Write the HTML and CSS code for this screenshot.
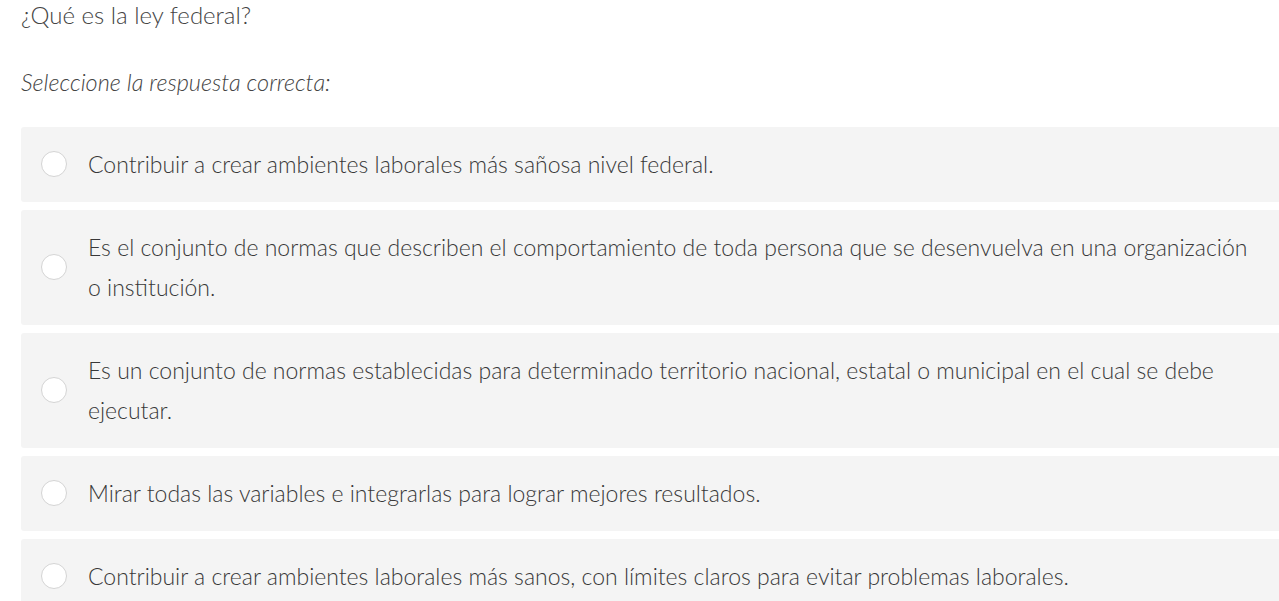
FILE: index.html
```html
<!DOCTYPE html>
<html lang="es">
<head>
<meta charset="utf-8">
<link rel="stylesheet" href="styles.css">
</head>
<body>
<div class="quiz">
  <p class="question">¿Qué es la ley federal?</p>
  <p class="prompt">Seleccione la respuesta correcta:</p>
  <div class="options">
    <label class="option"><span class="radio"></span><span class="text">Contribuir a crear ambientes laborales más sañosa nivel federal.</span></label>
    <label class="option"><span class="radio"></span><span class="text">Es el conjunto de normas que describen el comportamiento de toda persona que se desenvuelva en una organización o institución.</span></label>
    <label class="option"><span class="radio"></span><span class="text">Es un conjunto de normas establecidas para determinado territorio nacional, estatal o municipal en el cual se debe ejecutar.</span></label>
    <label class="option"><span class="radio"></span><span class="text">Mirar todas las variables e integrarlas para lograr mejores resultados.</span></label>
    <label class="option"><span class="radio"></span><span class="text">Contribuir a crear ambientes laborales más sanos, con límites claros para evitar problemas laborales.</span></label>
  </div>
</div>
</body>
</html>
```
FILE: styles.css
```css
html, body {
  margin: 0;
  padding: 0;
  background: #ffffff;
  overflow: hidden;
}
body {
  font-family: "Lato", "Open Sans", sans-serif;
  color: #333333;
}
.quiz {
  padding: 0 0 0 21px;
  margin-right: -12px;
}
.question {
  margin: 0;
  font-size: 24px;
  line-height: 30px;
  font-weight: 300;
  color: #444;
}
.prompt {
  margin: 37px 0 0 0;
  font-size: 23.5px;
  line-height: 30px;
  font-style: italic;
  font-weight: 300;
  color: #444;
}
.options {
  margin-top: 30px;
  display: flex;
  flex-direction: column;
  gap: 8px;
}
.option {
  display: flex;
  align-items: center;
  background: #f4f4f4;
  border-radius: 3px;
  padding: 17px 33px 18px 20px;
}
.radio {
  flex: none;
  width: 26px;
  height: 26px;
  border-radius: 50%;
  background: #fff;
  border: 1px solid #d4d4d4;
  box-sizing: border-box;
  margin-right: 21px;
}
.text {
  font-size: 23px;
  line-height: 40px;
  font-weight: 300;
  color: #383838;
}
```
